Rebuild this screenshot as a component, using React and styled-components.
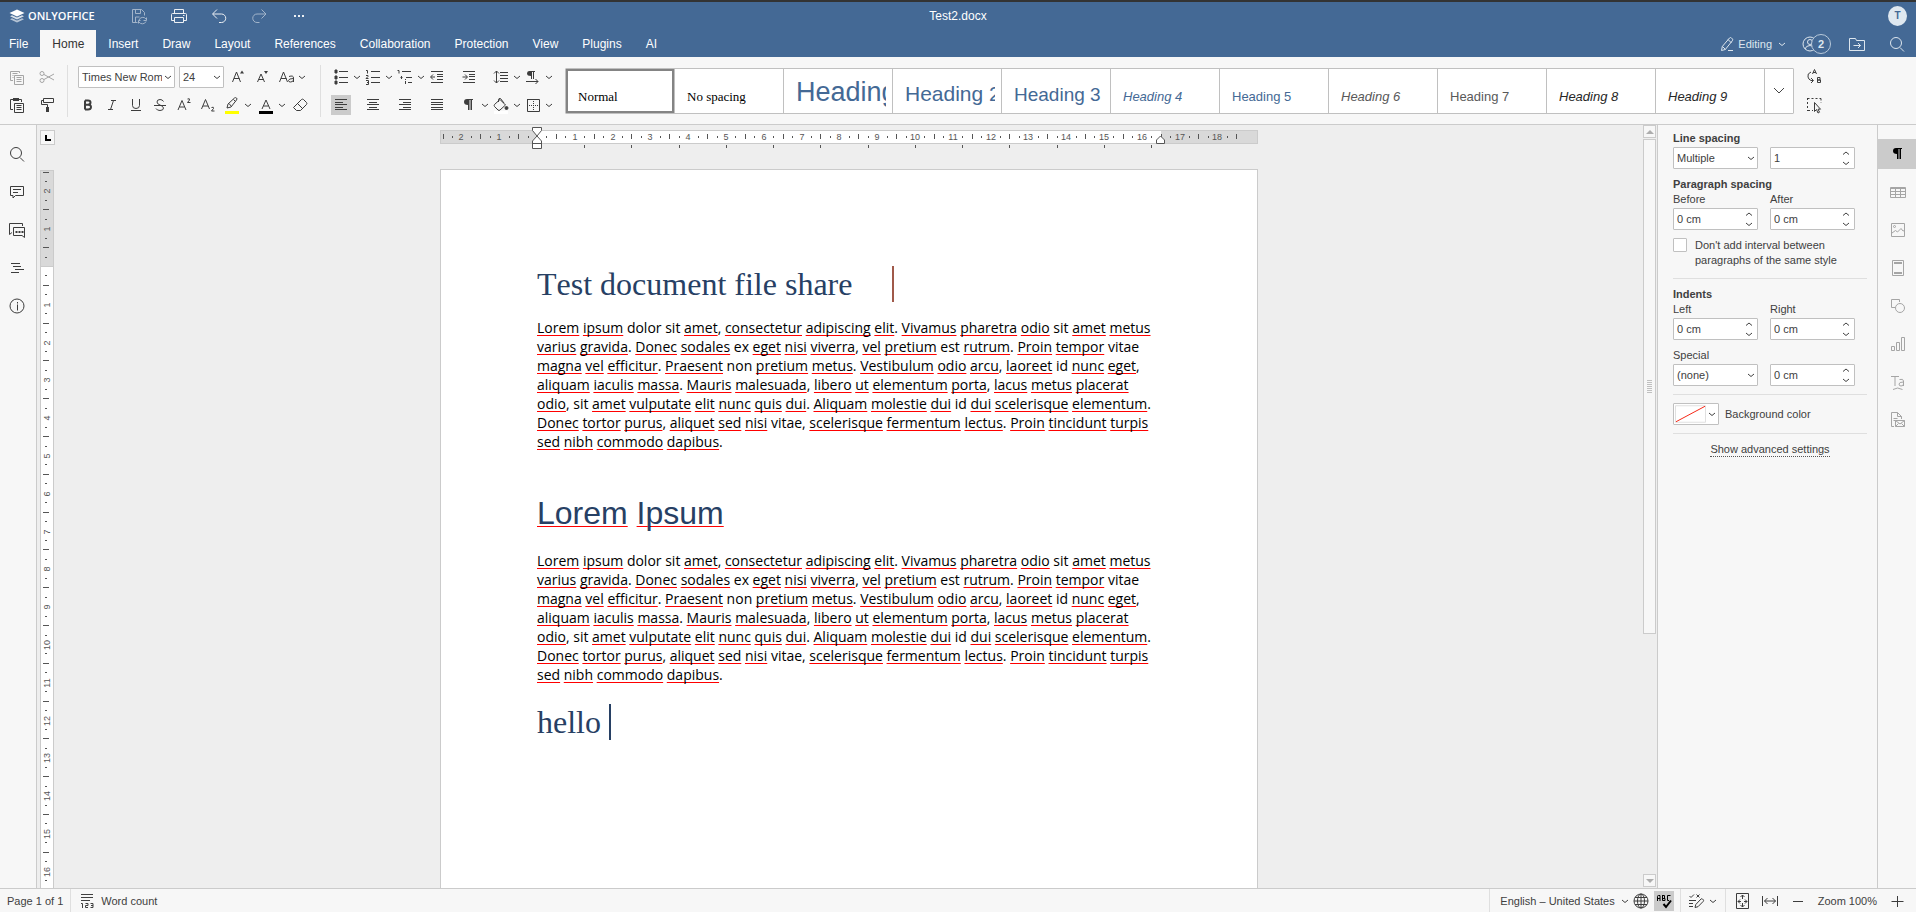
import React, { useState } from 'react';
import styled, { createGlobalStyle } from 'styled-components';

const colors = {
  header: '#446995',
  bar: '#f7f7f7',
  canvas: '#eeeeee',
  border: '#cbcbcb',
  control: '#c0c0c0',
  divider: '#dfdfdf',
  active: '#cbcbcb',
  text: '#404040',
  icon: '#3d3d3d',
  muted: '#a5a5a5',
  heading: '#274064',
  style: '#446995',
};

const CM = 37.795;

// ----- Icons, drawn on a 20 x 20 grid
const icons = {
  save: (
    <>
      <path d="M8.5 16.5h-5v-13h9l3 3v3M6.5 3.5v4h5v-4M6.5 16v-5h4" />
      <path d="M9.5 17.5v-3h2M17.5 11.5v3h-3M10 14a4 4 0 0 1 7-1M17 15.5a4 4 0 0 1-7 .5" />
    </>
  ),
  print: (
    <>
      <path d="M5.5 7V3.5h9V7M5.5 14.5h-3v-6q0-1 1-1h13q1 0 1 1v6h-3" />
      <path d="M5.5 11.5h9v5h-9zM14 9.5h1.5" />
    </>
  ),
  undo: <path d="M8 3.5L3.5 8 8 12.500M4 8h8.500a4.200 4.200 0 0 1 0 8.500H10" />,
  redo: <path d="M12.500 3.500L17 8l-4.500 4.500M16.500 8H8a4.200 4.200 0 0 0 0 8.500h2.500" />,
  more: <path d="M5 9h2v2H5zM9 9h2v2H9zM13 9h2v2h-2z" fill="currentColor" stroke="none" />,
  pencil: (
    <>
      <path d="M3.500 16.500l.8-4L11.500 4q1-1 2 0l.8.8q1 1 0 2L7.300 15.500zM10 5.500l3.500 3.500M4.500 12.500l3 3" />
      <path d="M10 16.500h5" />
    </>
  ),
  folder: <path d="M2.500 16.500v-12h6l1 2h8v10zM6.500 11.500h7M11 9l2.500 2.500L11 14" />,
  search: (
    <>
      <circle cx="9" cy="9" r="5.500" />
      <path d="M13 13.500l4 4" />
    </>
  ),
  copy: (
    <>
      <path d="M6 13.500H3.500v-9h9V6M5.500 6.500h5M5.500 8.500h1M5.500 10.500h1" />
      <path d="M7.500 8.500h9v9h-9zM9.500 10.500h5M9.500 12.500h5M9.500 14.500h5" />
    </>
  ),
  cut: (
    <>
      <circle cx="5" cy="6.500" r="2" />
      <circle cx="5" cy="13.500" r="2" />
      <path d="M7 7.500l10 5.500M7 12.500L17 7" />
    </>
  ),
  paste: (
    <>
      <path d="M6 14.500H3.500v-10H14.500V7" />
      <path d="M6 3h6v3H6z" fill="currentColor" stroke="none" />
      <path d="M7.500 8.500h9v9h-9zM9.500 10.500h5M9.500 12.500h5M9.500 14.500h5" />
    </>
  ),
  painter: (
    <>
      <path d="M6.500 3.500h10v4h-10zM6 5.500H4.500v4h6V12" />
      <path d="M9 12h3v5H9z" fill="currentColor" stroke="none" />
    </>
  ),
  grow: (
    <>
      <path d="M4.500 15l4-10 4 10M6 11.500h5.500" />
      <path d="M12 6.500l2-3 2 3z" fill="currentColor" stroke="none" />
    </>
  ),
  shrink: (
    <>
      <path d="M5.500 15L9 7l3.500 8M7 12.500h4.500" />
      <path d="M12 4l2 3 2-3z" fill="currentColor" stroke="none" />
    </>
  ),
  letterCase: (
    <>
      <path d="M3.500 15l4-10 4 10M5 11.500h5.500" />
      <path d="M13 9.500q4.500-1.500 4.500 1.500v4M17.500 11.500q-5 0-5 2 0 1.500 2 1.500 2.500 0 3-2" />
    </>
  ),
  bold: (
    <path
      d="M7 5.500v9M7 5.500h3q2.500 0 2.500 2t-2.500 2.200H7M10 9.700q3 0 3 2.400t-3 2.400H7"
      strokeWidth="2"
    />
  ),
  italic: <path d="M9 5.500h5M6 14.500h5M11.500 5.500l-3 9" />,
  underline: <path d="M6.500 4v6.500q0 3 3.500 3t3.500-3V4M5 15.500h10" />,
  strike: <path d="M13.500 6.500q-1-2-3.500-2-3 0-3 2.500 0 2 3 3t3.500 3q0 2.500-3.500 2.500-3 0-4-2M4 10.500h12" />,
  superscript: (
    <>
      <path d="M4 15L8 5.500 12 15M5.500 12h5" />
      <path d="M13.500 4q2.500-1 2 1l-2 2.500h3" />
    </>
  ),
  subscript: (
    <>
      <path d="M3.500 14l4-9.500 4 9.500M5 11h5" />
      <path d="M13.500 12.500q2.500-1 2 1l-2 2.500h3" />
    </>
  ),
  highlight: (
    <>
      <path d="M5 13l1-4 6.500-6q1-.8 2 0t0 2L9 12l-4 1M7 8.500l2.500 3M11.500 4.500l2 2" />
      <path d="M3 16h14v3H3z" fill="#ffff00" stroke="none" />
    </>
  ),
  fontColor: (
    <>
      <path d="M6 14l4-9 4 9M7.500 11h5" />
      <path d="M3 16h14v3H3z" fill="#000" stroke="none" />
    </>
  ),
  eraser: <path d="M3.500 12.500l8-8q1-.8 2 0l3 3q.8 1 0 2l-6 6h-4l-3-3zM7.500 8.500l5 5" />,
  bullets: (
    <>
      <path d="M8 4.500h9M8 10.500h9M8 15.500h9" />
      <path d="M4 3h2v3H4zM4 9h2v3H4zM4 14h2v3H4z" fill="currentColor" />
    </>
  ),
  numbers: (
    <path d="M8 4.500h9M8 10.500h9M8 15.500h9M3 3.500h1.500v3M3 8.500h2v1l-2 2h2.500M3 13.500h2.500v4H3M4 15.500h1" />
  ),
  multilevel: <path d="M2.500 3.500H4v3M7 4.500h9M11 10.500h6M13 15.500h4M6.500 9v3M5.500 10.500h2M10.500 12v1M10.500 14v3" />,
  outdent: <path d="M4 4.500h12M10 7.500h6M10 9.500h6M10 12.500h6M4 15.500h12M8 10H4M6 7.500L3.500 10 6 12.500" />,
  indent: <path d="M4 4.500h12M10 7.500h6M10 9.500h6M10 12.500h6M4 15.500h12M3.500 10H8M6 7.500L8.500 10 6 12.500" />,
  lineSpacing: <path d="M9 5.500h8M9 8.500h8M9 11.500h8M9 14.500h8M5.500 4v12M3 6.500L5.500 4 8 6.500M3 13.500L5.500 16 8 13.500" />,
  direction: (
    <>
      <path d="M6 4h6v1h-1v7h-1V5H9v7H8V9Q4 9 4 6.500T6 4z" fill="currentColor" stroke="none" />
      <path d="M3 14.500h12M12.500 12l2.500 2.500-2.500 2.500" />
    </>
  ),
  alignLeft: <path d="M4 4.500h12M4 7.500h8M4 9.500h12M4 12.500h8M4 14.500h12" />,
  alignCenter: <path d="M4 4.500h12M6 7.500h8M4 9.500h12M6 12.500h8M4 14.500h12" />,
  alignRight: <path d="M4 4.500h12M8 7.500h8M4 9.500h12M8 12.500h8M4 14.500h12" />,
  justify: <path d="M4 4.500h12M4 7.500h12M4 9.500h12M4 12.500h12M4 14.500h12" />,
  pilcrow: (
    <path d="M8 4h6v1h-1v10h-1.500V5H10.500v10H9v-5Q5 10 5 7T8 4z" fill="currentColor" stroke="none" />
  ),
  fill: (
    <>
      <path d="M9 4.500l5.500 5.500-5.500 5Q8 16 7 15l-3.500-3.500q-.7-1 0-2zM7.500 7V5q0-2 2-1.500L13 8" />
      <circle cx="15.500" cy="13" r="1.500" fill="currentColor" />
      <path d="M3 16h14v3H3z" fill="#fff" stroke="none" />
    </>
  ),
  borders: (
    <>
      <path d="M4 4.500h12.500v12H4.500V4.500z" />
      <path d="M10.500 6v9M6 10.500h9" strokeDasharray="1 1" />
    </>
  ),
  replace: (
    <>
      <path d="M7 5q-4 1.500-3 5 .5 2.500 3 3.500H9M7 11l2.500 2.500L7 16" />
      <path d="M8.500 7l2-4.500 2 4.500M9 5.500h3M13.500 10.500v5h3v-2.500h-3 2.500v-2.500z" />
    </>
  ),
  select: (
    <>
      <path d="M3.500 3v13M3.500 3.500H17M17 3.500V8M4 15.500h5" strokeDasharray="2 2" />
      <path d="M10.500 7.500v9l2-2 1.500 3.500 1.500-.8-1.500-3h2.500z" />
    </>
  ),
  comment: <path d="M3.500 4.500h13v9h-8L6 16v-2.500H3.500zM6 7.500h8M6 10.500h5" />,
  chat: (
    <>
      <path d="M5 12.500L2.500 14.500v-11h13V6M6.500 7.500h11v10L15 15.500H6.500z" />
      <path d="M8.500 11h2v2h-2zM11.500 11h2v2h-2zM14.500 11h2v2h-2z" fill="currentColor" stroke="none" />
    </>
  ),
  navigation: <path d="M4 5.500h9M6 8.500h8M8 11.500h9M4 14.500h8" />,
  info: (
    <>
      <circle cx="10" cy="10" r="7" />
      <path d="M10.500 6v1.500M10.500 8.500v6" />
    </>
  ),
  table: <path d="M2.500 5.500h15v10h-15zM2.500 6.500h15M2.500 9.500h15M2.500 12.500h15M7.500 6v9M12.500 6v9" />,
  image: (
    <>
      <path d="M3.500 3.500h13v13h-13zM4 13l3.500-2.500 2 1.500 3.500-3.500 2 2.500 1.500-.5" />
      <circle cx="6.500" cy="6.500" r="1" />
    </>
  ),
  headerFooter: (
    <>
      <path d="M4.500 2.500h11v15h-11z" />
      <path d="M6 5h8M6 15h8" strokeWidth="2" />
    </>
  ),
  shape: (
    <>
      <path d="M7 11.500H3.500v-8h8V6" />
      <circle cx="12" cy="12" r="4.500" />
    </>
  ),
  chart: <path d="M3.500 12.500h3v4h-3zM8.500 8.500h3v8h-3zM13.500 3.500h3v13h-3z" />,
  textArt: <path d="M3 4.500h8M7 4.500V14M11.500 7.500q4-1 4 1.500v5M15.500 10q-4.500 0-4.500 2t2 2q2.500 0 2.500-2M5 17.500q4.500-3 9.500 0" />,
  mailMerge: <path d="M6 16.500H3.500v-14h6l4 4V9M9.500 2.500v4h4M5.500 8.500h4M5.500 10.500h2M7.500 10.500h9v6h-9zM7.500 10.500l4.500 3.500 4.500-3.500M7.500 16.500l3-3M16.500 16.500l-3-3" />,
  wordCount: (
    <>
      <path d="M4 3.500h12M4 6.500h12M4 9.500h9" />
      <path d="M4 12.500h1.500V17M8.500 12.500h2.500v2H8.500v2H11M13.500 12.500H16v4h-2.500M14 14.500h2" />
    </>
  ),
  globe: (
    <>
      <circle cx="10" cy="10" r="7" />
      <ellipse cx="10" cy="10" rx="3.500" ry="7" />
      <path d="M10 3v14M3 10h14M4 6.500h12M4 13.500h12" />
    </>
  ),
  spelling: (
    <>
      <path
        d="M3.500 10V5.500q0-1 1-1h1.500v5.500M3.500 7.500H6M8.500 4v5.500H11V7.500H8.500M8 4.500h2.500v3M16.500 4.500h-3v5h1.500"
        stroke="#000"
      />
      <path d="M9.500 13l2.500 3 5-6.500" strokeWidth="2" stroke="#000" />
    </>
  ),
  track: (
    <>
      <path d="M2.500 5l1.500 1.500L7 3.500M9.500 3.500l3 3M12.500 3.500l-3 3M2 9.500h7M2 12.500h4M2 15.500h4" />
      <path d="M8 16.500l.8-3L14 8q.8-.6 1.500 0l.8.8q.6.700 0 1.500L11 15.700z" />
    </>
  ),
  fitPage: (
    <path d="M4.500 2.500h12v15h-12zM10.500 4v4M10.500 12v4M6 10.500h3M12 10.500h3M8.500 6l2-2 2 2M8.500 14l2 2 2-2M8 8.500l-2 2 2 2M13 8.500l2 2-2 2" />
  ),
  fitWidth: <path d="M2.500 5v10M17.500 5v10M4.500 10h11M7.500 7l-3 3 3 3M12.500 7l3 3-3 3" />,
  minus: <path d="M5 10.500h10" />,
  plus: <path d="M4.500 10.500h12M10.500 5v11" />,
};

const Icon = ({ name }) => (
  <Glyph viewBox="0 0 20 20" aria-hidden="true">
    {icons[name]}
  </Glyph>
);

const Caret = ({ up }) => (
  <CaretGlyph viewBox="0 0 12 12" aria-hidden="true">
    <path d={up ? 'M3 7.500L6 5l3 2.500' : 'M3 5l3 2.500L9 5'} />
  </CaretGlyph>
);

const ToolButton = ({ icon, label, split, active, disabled }) => (
  <Tool type="button" aria-label={label} $active={active} $disabled={disabled}>
    <Icon name={icon} />
    {split && <Caret />}
  </Tool>
);

const Combo = ({ label, options, grow, width }) => (
  <ComboBox $width={width} $grow={grow}>
    <select aria-label={label}>
      {options.map((option) => (
        <option key={option}>{option}</option>
      ))}
    </select>
    <Caret />
  </ComboBox>
);

const Spinner = ({ id, label, initial }) => {
  const [value, setValue] = useState(initial);

  const step = (delta) => {
    const unit = value.replace(/[-\d.]/g, '');
    setValue(`${Math.max(0, (parseFloat(value) || 0) + delta)}${unit}`);
  };

  return (
    <SpinBox>
      <input id={id} aria-label={label} value={value} onChange={(e) => setValue(e.target.value)} />
      <SpinButtons>
        <button type="button" aria-label="Increase" onClick={() => step(1)}><Caret up /></button>
        <button type="button" aria-label="Decrease" onClick={() => step(-1)}><Caret /></button>
      </SpinButtons>
    </SpinBox>
  );
};

// ----- Rulers
const rulerMarks = (before, after) => {
  const marks = [];
  for (let q = Math.ceil((-before / CM) * 4); q <= (after / CM) * 4; q += 1) {
    if (q !== 0) marks.push({ q, pos: Math.round(before + (q * CM) / 4) });
  }
  return marks;
};

const HorizontalRuler = () => (
  <RulerTop viewBox="0 0 818 25" aria-hidden="true">
    <path d="M0 5h818v14H0z" fill="#cbcbcb" />
    <path d="M1 6h816v12H1z" fill="#d9d9d9" />
    <path d="M97 6h624v12H97z" fill="#fff" />
    {rulerMarks(97, 706).map(({ q, pos }) => {
      if (q % 4 === 0) {
        return <text key={q} x={pos} y="15" textAnchor="middle">{Math.abs(q / 4)}</text>;
      }
      return q % 2 === 0
        ? <path key={q} d={`M${pos}.5 9v5`} stroke="#555" />
        : <path key={q} d={`M${pos}.5 11v2`} stroke="#555" />;
    })}
    {Array.from({ length: 13 }, (_, i) => (
      <path key={i} d={`M${Math.round(97 + (i + 1) * CM * 1.25)}.5 20v3`} stroke="#555" />
    ))}
    <path d="M92.500 2.500h9v3L97 11l4.500 5v7.500h-9V16L97 11l-4.500-5.500zM92.500 18.500h9" fill="#fff" stroke="#555" />
    <path d="M716.500 18.500v-3.500l4-4 4 4v3.500z" fill="#fff" stroke="#555" />
  </RulerTop>
);

const VerticalRuler = () => (
  <RulerSide viewBox="0 0 14 1056" aria-hidden="true">
    <path d="M0 0h14v1056H0z" fill="#cbcbcb" />
    <path d="M1 1h12v95H1z" fill="#d9d9d9" />
    <path d="M1 97h12v863H1z" fill="#fff" />
    {rulerMarks(96, 864).map(({ q, pos }) => {
      if (q % 4 === 0) {
        return (
          <text key={q} transform={`translate(10 ${pos + 1}) rotate(-90)`} textAnchor="middle">
            {Math.abs(q / 4)}
          </text>
        );
      }
      return q % 2 === 0
        ? <path key={q} d={`M3 ${pos}.5h6`} stroke="#555" />
        : <path key={q} d={`M5 ${pos}.5h2`} stroke="#555" />;
    })}
  </RulerSide>
);

// ----- Document
const loremLines = [
  '_Lorem_ _ipsum_ dolor sit _amet_, _consectetur_ _adipiscing_ _elit_. _Vivamus_ _pharetra_ _odio_ sit _amet_ _metus_',
  '_varius_ _gravida_. _Donec_ _sodales_ ex _eget_ _nisi_ _viverra_, _vel_ _pretium_ est _rutrum_. _Proin_ _tempor_ vitae',
  '_magna_ _vel_ _efficitur_. _Praesent_ non _pretium_ _metus_. _Vestibulum_ _odio_ _arcu_, _laoreet_ id _nunc_ _eget_,',
  '_aliquam_ _iaculis_ _massa_. _Mauris_ _malesuada_, _libero_ _ut_ _elementum_ _porta_, _lacus_ _metus_ _placerat_',
  '_odio_, sit _amet_ _vulputate_ _elit_ _nunc_ _quis_ _dui_. _Aliquam_ _molestie_ _dui_ id _dui_ _scelerisque_ _elementum_.',
  '_Donec_ _tortor_ _purus_, _aliquet_ _sed_ _nisi_ vitae, _scelerisque_ _fermentum_ _lectus_. _Proin_ _tincidunt_ _turpis_',
  '_sed_ _nibh_ _commodo_ _dapibus_.',
];

const Lorem = () => (
  <Paragraph>
    {loremLines.map((line) => (
      <Line key={line}>
        {line.split('_').map((part, i) => (i % 2 ? <Misspelled key={i}>{part}</Misspelled> : part))}
      </Line>
    ))}
  </Paragraph>
);

const tabs = ['File', 'Home', 'Insert', 'Draw', 'Layout', 'References', 'Collaboration', 'Protection', 'View', 'Plugins', 'AI'];

const serif = '"Liberation Serif", "Times New Roman", serif';

const textStyles = [
  { name: 'Normal', size: 13, color: '#000', font: serif },
  { name: 'No spacing', size: 13, color: '#000', font: serif },
  { name: 'Heading 1', size: 27, color: colors.style },
  { name: 'Heading 2', size: 21, color: colors.style },
  { name: 'Heading 3', size: 19, color: colors.style },
  { name: 'Heading 4', size: 13, color: colors.style, italic: true },
  { name: 'Heading 5', size: 13, color: colors.style },
  { name: 'Heading 6', size: 13, color: '#595959', italic: true },
  { name: 'Heading 7', size: 13, color: '#595959' },
  { name: 'Heading 8', size: 13, color: '#272727', italic: true },
  { name: 'Heading 9', size: 13, color: '#272727', italic: true },
];

const paragraphTools = [
  ['bullets', 'Bullets', true],
  ['numbers', 'Numbering', true],
  ['multilevel', 'Multilevel list', true],
  ['outdent', 'Decrease indent'],
  ['indent', 'Increase indent'],
  ['lineSpacing', 'Line spacing', true],
  ['direction', 'Text direction', true],
  ['alignLeft', 'Align left'],
  ['alignCenter', 'Align center'],
  ['alignRight', 'Align right'],
  ['justify', 'Justified'],
  ['pilcrow', 'Nonprinting characters', true],
  ['fill', 'Shading', true],
  ['borders', 'Borders', true],
];

const Header = () => (
  <Top>
    <TitleRow>
      <TitleSide>
        <Brand href="#">
          <svg width="16" height="15" viewBox="0 0 16 15" aria-hidden="true">
            <path d="M1 10.200L8 13.500l7-3.300-2-1-5 2.300-5-2.300z" fill="#fff" opacity=".6" />
            <path d="M1 7.200L8 10.500l7-3.300-2-1-5 2.300-5-2.300z" fill="#fff" opacity=".8" />
            <path d="M8 .5l7.500 3.400L8 7.400.5 3.900z" fill="#fff" />
          </svg>
          ONLYOFFICE
        </Brand>
        <QuickButton type="button" aria-label="Save" $dim><Icon name="save" /></QuickButton>
        <QuickButton type="button" aria-label="Print"><Icon name="print" /></QuickButton>
        <QuickButton type="button" aria-label="Undo"><Icon name="undo" /></QuickButton>
        <QuickButton type="button" aria-label="Redo" $dim><Icon name="redo" /></QuickButton>
        <QuickButton type="button" aria-label="More"><Icon name="more" /></QuickButton>
      </TitleSide>
      <DocTitle>Test2.docx</DocTitle>
      <TitleSide $end><Avatar>T</Avatar></TitleSide>
    </TitleRow>
    <TabRow>
      <Tabs>
        {tabs.map((tab) => (
          <Tab key={tab} type="button" $active={tab === 'Home'}>{tab}</Tab>
        ))}
      </Tabs>
      <HeaderTools>
        <HeaderButton type="button">
          <Icon name="pencil" />
          Editing
          <Caret />
        </HeaderButton>
        <HeaderButton type="button" aria-label="2 users">
          <svg width="16" height="16" viewBox="0 0 16 16" aria-hidden="true" fill="none" stroke="currentColor">
            <circle cx="8" cy="8" r="7" />
            <circle cx="8" cy="6" r="2.500" />
            <path d="M3 13q1-3.500 5-3.500t5 3.500" />
          </svg>
          <UserCount>2</UserCount>
        </HeaderButton>
        <HeaderButton type="button" aria-label="Open file location"><Icon name="folder" /></HeaderButton>
        <HeaderButton type="button" aria-label="Search"><Icon name="search" /></HeaderButton>
      </HeaderTools>
    </TabRow>
  </Top>
);

const Toolbar = () => (
  <Tools>
    <ToolGroup>
      <ToolRow $gap={10}>
        <ToolButton icon="copy" label="Copy" disabled />
        <ToolButton icon="cut" label="Cut" disabled />
      </ToolRow>
      <ToolRow $gap={10}>
        <ToolButton icon="paste" label="Paste" />
        <ToolButton icon="painter" label="Copy style" />
      </ToolRow>
    </ToolGroup>
    <Separator />
    <ToolGroup>
      <ToolRow $gap={4}>
        <Combo label="Font" width={97} options={['Times New Roman', 'Arial', 'Open Sans']} />
        <Combo label="Font size" width={45} options={['24', '11', '12']} />
        <ToolButton icon="grow" label="Increment font size" />
        <ToolButton icon="shrink" label="Decrement font size" />
        <ToolButton icon="letterCase" label="Change case" split />
      </ToolRow>
      <ToolRow>
        <ToolRow $gap={4}>
          <ToolButton icon="bold" label="Bold" />
          <ToolButton icon="italic" label="Italic" />
          <ToolButton icon="underline" label="Underline" />
          <ToolButton icon="strike" label="Strikeout" />
          <ToolButton icon="superscript" label="Superscript" />
          <ToolButton icon="subscript" label="Subscript" />
          <ToolButton icon="highlight" label="Highlight color" split />
        </ToolRow>
        <ToolRow $gap={2} $lead={2}>
          <ToolButton icon="fontColor" label="Font color" split />
          <ToolButton icon="eraser" label="Clear style" />
        </ToolRow>
      </ToolRow>
    </ToolGroup>
    <Separator />
    <ParagraphGrid>
      {paragraphTools.map(([icon, label, split]) => (
        <ToolButton key={icon} icon={icon} label={label} split={split} active={icon === 'alignLeft'} />
      ))}
    </ParagraphGrid>
    <Gallery>
      {textStyles.map((style) => (
        <StyleCell
          key={style.name}
          type="button"
          $active={style.name === 'Normal'}
          $size={style.size}
          $color={style.color}
          $font={style.font}
          $italic={style.italic}
        >
          <span>{style.name}</span>
        </StyleCell>
      ))}
      <GalleryMore type="button" aria-label="More styles">
        <svg width="14" height="10" viewBox="0 0 14 10" aria-hidden="true">
          <path d="M2 2l5 5 5-5" fill="none" stroke="#444" />
        </svg>
      </GalleryMore>
    </Gallery>
    <ToolGroup>
      <ToolRow><ToolButton icon="replace" label="Replace" /></ToolRow>
      <ToolRow><ToolButton icon="select" label="Select" /></ToolRow>
    </ToolGroup>
  </Tools>
);

const ParagraphPanel = () => {
  const [noInterval, setNoInterval] = useState(false);

  return (
    <Panel>
      <PanelTitle>Line spacing</PanelTitle>
      <FieldGrid $top={2}>
        <Combo label="Line spacing" options={['Multiple', 'At least', 'Exactly']} grow />
        <Spinner label="Line spacing value" initial="1" />
      </FieldGrid>
      <PanelTitle $top={8}>Paragraph spacing</PanelTitle>
      <FieldGrid $top={1}>
        <label htmlFor="before">Before</label>
        <label htmlFor="after">After</label>
        <Spinner id="before" initial="0 cm" />
        <Spinner id="after" initial="0 cm" />
      </FieldGrid>
      <CheckLabel>
        <input type="checkbox" checked={noInterval} onChange={(e) => setNoInterval(e.target.checked)} />
        <span>Don't add interval between paragraphs of the same style</span>
      </CheckLabel>
      <PanelLine />
      <PanelTitle $top={8}>Indents</PanelTitle>
      <FieldGrid $top={1}>
        <label htmlFor="left">Left</label>
        <label htmlFor="right">Right</label>
        <Spinner id="left" initial="0 cm" />
        <Spinner id="right" initial="0 cm" />
      </FieldGrid>
      <FieldGrid $top={8}>
        <span>Special</span>
        <span />
        <Combo label="Special" options={['(none)', 'First line', 'Hanging']} grow />
        <Spinner label="Special value" initial="0 cm" />
      </FieldGrid>
      <PanelLine />
      <ColorRow>
        <ColorButton type="button" id="background" aria-label="Background color">
          <svg width="32" height="18" viewBox="0 0 32 18" aria-hidden="true">
            <path d="M.5.5h31v17H.5z" fill="#fff" stroke="#dfdfdf" />
            <path d="M1 17L31 1" stroke="#f62211" />
          </svg>
          <Caret />
        </ColorButton>
        <label htmlFor="background">Background color</label>
      </ColorRow>
      <PanelLine />
      <Advanced href="#">Show advanced settings</Advanced>
    </Panel>
  );
};

export default function App() {
  return (
    <Shell>
      <GlobalStyle />
      <Header />
      <Toolbar />
      <Main>
        <LeftBar>
          <SideButton type="button" aria-label="Find"><Icon name="search" /></SideButton>
          <SideButton type="button" aria-label="Comments"><Icon name="comment" /></SideButton>
          <SideButton type="button" aria-label="Chat"><Icon name="chat" /></SideButton>
          <SideButton type="button" aria-label="Headings"><Icon name="navigation" /></SideButton>
          <SideButton type="button" aria-label="About"><Icon name="info" /></SideButton>
        </LeftBar>
        <RulerColumn>
          <TabStop type="button" aria-label="Tab stop">
            <svg width="6" height="6" viewBox="0 0 6 6" aria-hidden="true">
              <path d="M1 0v5h5" fill="none" stroke="#000" strokeWidth="2" />
            </svg>
          </TabStop>
          <VerticalRuler />
        </RulerColumn>
        <Canvas>
          <HorizontalRuler />
          <Page>
            <DocHeading>
              Test document file share
              <TextCursor $gap={40} $color="#a0594a" />
            </DocHeading>
            <Lorem />
            <DocHeading $sans>
              <span>
                <Misspelled>Lorem</Misspelled> <Misspelled>Ipsum</Misspelled>
              </span>
            </DocHeading>
            <Lorem />
            <DocHeading $last>
              hello
              <TextCursor $gap={8} $color={colors.heading} />
            </DocHeading>
          </Page>
        </Canvas>
        <Scrollbar>
          <ScrollButton type="button" aria-label="Scroll up">
            <svg width="8" height="4" viewBox="0 0 8 4" aria-hidden="true"><path d="M0 4l4-4 4 4z" fill="#adadad" /></svg>
          </ScrollButton>
          <Thumb>
            <svg width="5" height="13" viewBox="0 0 5 13" aria-hidden="true">
              <path d="M0 .5h5M0 2.500h5M0 4.500h5M0 6.500h5M0 8.500h5M0 10.500h5M0 12.500h5" stroke="#c0c0c0" />
            </svg>
          </Thumb>
          <ScrollButton type="button" aria-label="Scroll down">
            <svg width="8" height="4" viewBox="0 0 8 4" aria-hidden="true"><path d="M0 0l4 4 4-4z" fill="#adadad" /></svg>
          </ScrollButton>
        </Scrollbar>
        <ParagraphPanel />
        <RightBar>
          <SideButton type="button" aria-label="Paragraph settings" $active><Icon name="pilcrow" /></SideButton>
          <SideButton type="button" aria-label="Table settings" $dim><Icon name="table" /></SideButton>
          <SideButton type="button" aria-label="Image settings" $dim><Icon name="image" /></SideButton>
          <SideButton type="button" aria-label="Header and footer settings" $dim><Icon name="headerFooter" /></SideButton>
          <SideButton type="button" aria-label="Shape settings" $dim><Icon name="shape" /></SideButton>
          <SideButton type="button" aria-label="Chart settings" $dim><Icon name="chart" /></SideButton>
          <SideButton type="button" aria-label="Text Art settings" $dim><Icon name="textArt" /></SideButton>
          <SideButton type="button" aria-label="Mail merge settings" $dim><Icon name="mailMerge" /></SideButton>
        </RightBar>
      </Main>
      <Status>
        <StatusGroup $left={7} $right={7}>
          <StatusText type="button">Page 1 of 1</StatusText>
        </StatusGroup>
        <StatusGroup $grow>
          <StatusText type="button"><Icon name="wordCount" />Word count</StatusText>
        </StatusGroup>
        <StatusGroup $left={10}>
          <StatusText type="button">English – United States<Caret /></StatusText>
          <StatusTools>
            <Tool type="button" aria-label="Set document language"><Icon name="globe" /></Tool>
            <Tool type="button" aria-label="Spell checking" $active><Icon name="spelling" /></Tool>
          </StatusTools>
        </StatusGroup>
        <StatusGroup>
          <ToolButton icon="track" label="Track changes" split />
        </StatusGroup>
        <StatusGroup $right={9}>
          <StatusTools $gap={8}>
            <ToolButton icon="fitPage" label="Fit to page" />
            <ToolButton icon="fitWidth" label="Fit to width" />
            <ToolButton icon="minus" label="Zoom out" />
          </StatusTools>
          <ZoomValue>Zoom 100%</ZoomValue>
          <ToolButton icon="plus" label="Zoom in" />
        </StatusGroup>
      </Status>
    </Shell>
  );
}

// ----- Styled
const GlobalStyle = createGlobalStyle`
  * {
    box-sizing: border-box;
  }

  body {
    margin: 0;
    font-family: "Liberation Sans", Arial, sans-serif;
    font-size: 11px;
    line-height: 14px;
    color: ${colors.text};
  }

  button, input, select {
    font: inherit;
    color: inherit;
    margin: 0;
  }

  button {
    padding: 0;
    border: none;
    background: none;
    white-space: nowrap;
  }
`;

const Glyph = styled.svg`
  flex: none;
  width: 20px;
  height: 20px;
  fill: none;
  stroke: currentColor;
`;

const CaretGlyph = styled.svg`
  flex: none;
  width: 12px;
  height: 12px;
  fill: none;
  stroke: currentColor;
`;

const Shell = styled.div`
  display: flex;
  flex-direction: column;
  height: 100vh;
  overflow: hidden;
  background: ${colors.bar};
`;

const Top = styled.header`
  background: ${colors.header};
  border-top: 2px solid #333;
  color: #fff;
  font-size: 12px;
`;

const TitleRow = styled.div`
  display: grid;
  grid-template-columns: 1fr auto 1fr;
  align-items: center;
  height: 28px;
  padding: 0 9px;
`;

const TitleSide = styled.div`
  display: flex;
  align-items: center;
  justify-content: ${({ $end }) => ($end ? 'flex-end' : 'flex-start')};
`;

const Brand = styled.a`
  display: flex;
  align-items: center;
  gap: 3px;
  width: 110px;
  color: #fff;
  font-family: "Open Sans", sans-serif;
  font-size: 11px;
  font-weight: 600;
  text-decoration: none;
`;

const QuickButton = styled.button`
  display: flex;
  justify-content: center;
  width: 40px;
  opacity: ${({ $dim }) => ($dim ? 0.5 : 0.9)};
`;

const DocTitle = styled.div`
  text-align: center;
`;

const Avatar = styled.div`
  width: 19px;
  height: 20px;
  border-radius: 50%;
  background: #dfe8f0;
  color: ${colors.header};
  font-size: 10px;
  font-weight: 700;
  line-height: 20px;
  text-align: center;
`;

const TabRow = styled.div`
  display: flex;
  justify-content: space-between;
  height: 27px;
`;

const Tabs = styled.nav`
  display: flex;
`;

const Tab = styled.button`
  padding: 0 12px;
  background: ${({ $active }) => ($active ? colors.bar : 'transparent')};
  color: ${({ $active }) => ($active ? '#333' : '#fff')};

  &:first-child {
    padding-left: 9px;
  }
`;

const HeaderTools = styled.div`
  display: flex;
  align-items: center;
  gap: 14px;
  padding-right: 9px;
`;

const HeaderButton = styled.button`
  display: flex;
  align-items: center;
  color: #dde6ee;
  font-size: 11px;

  & > ${CaretGlyph} {
    margin-left: 4px;
  }

  &:nth-child(3) {
    margin-left: 2px;
  }

  &:last-child {
    margin-left: 6px;
  }
`;

const UserCount = styled.span`
  width: 20px;
  height: 20px;
  margin-left: -7px;
  border: 1px solid #b9cadb;
  border-radius: 50%;
  background: ${colors.header};
  font-weight: 700;
  line-height: 18px;
  text-align: center;
`;

const Tools = styled.div`
  display: flex;
  align-items: flex-start;
  gap: 10px;
  padding: 8px 7px;
  height: 68px;
  flex: none;
  border-bottom: 1px solid ${colors.border};
`;

const ToolGroup = styled.div`
  display: flex;
  flex: none;
  flex-direction: column;
  gap: 6px;
  padding-top: 1px;
`;

const ToolRow = styled.div`
  display: flex;
  align-items: center;
  gap: ${({ $gap }) => $gap || 0}px;
  padding-left: ${({ $lead }) => $lead || 0}px;
  height: 22px;
`;

const Separator = styled.div`
  width: 1px;
  height: 52px;
  flex: none;
  background: ${colors.divider};
`;

const Tool = styled.button`
  display: flex;
  flex: none;
  align-items: center;
  height: 20px;
  background: ${({ $active }) => ($active ? colors.active : 'transparent')};
  color: ${({ $disabled }) => ($disabled ? colors.muted : colors.icon)};
`;

const ParagraphGrid = styled.div`
  display: grid;
  flex: none;
  grid-template-columns: repeat(7, 32px);
  grid-auto-rows: 22px;
  justify-items: start;
  align-items: center;
  row-gap: 6px;
  padding-top: 1px;
`;

const Gallery = styled.div`
  display: flex;
  min-width: 0;
  height: 46px;
  margin-top: 3px;
  overflow: hidden;
  border: 1px solid ${colors.control};
  border-radius: 1px;
  background: #fff;
`;

const StyleCell = styled.button`
  display: flex;
  flex: none;
  align-items: baseline;
  width: 109px;
  padding: 0 6px 0 12px;
  border-right: 1px solid ${colors.control};
  box-shadow: ${({ $active }) => ($active ? 'inset 0 0 0 2px #848484' : 'none')};
  color: ${({ $color }) => $color};
  font-family: ${({ $font }) => $font || 'inherit'};
  font-size: ${({ $size }) => $size}px;
  font-style: ${({ $italic }) => ($italic ? 'italic' : 'normal')};
  line-height: 32px;
  text-align: left;

  &::before {
    content: '';
    height: 32px;
  }

  span {
    flex: 1;
    overflow: hidden;
  }
`;

const GalleryMore = styled.button`
  display: flex;
  flex: none;
  align-items: center;
  justify-content: center;
  width: 28px;
`;

const ComboBox = styled.div`
  position: relative;
  width: ${({ $grow, $width }) => ($grow ? 'auto' : `${$width}px`)};
  height: 22px;

  select {
    width: 100%;
    height: 22px;
    padding: 0 12px 0 3px;
    border: 1px solid ${colors.control};
    border-radius: 1px;
    appearance: none;
    background: #fff;
    overflow: hidden;
  }

  ${CaretGlyph} {
    position: absolute;
    top: 5px;
    right: 1px;
    pointer-events: none;
  }
`;

const SpinBox = styled.div`
  display: flex;
  height: 22px;
  border: 1px solid ${colors.control};
  border-radius: 1px;
  background: #fff;

  input {
    flex: 1;
    min-width: 0;
    padding: 0 3px;
    border: none;
    background: none;
  }
`;

const SpinButtons = styled.div`
  display: flex;
  flex-direction: column;
  width: 16px;

  button {
    display: flex;
    align-items: center;
    justify-content: center;
    height: 10px;
  }
`;

const Main = styled.main`
  display: flex;
  flex: 1;
  min-height: 0;
`;

const LeftBar = styled.aside`
  display: flex;
  flex: none;
  flex-direction: column;
  gap: 8px;
  width: 37px;
  padding: 14px 2px 0 0;
  border-right: 1px solid ${colors.border};
`;

const SideButton = styled.button`
  display: flex;
  align-items: center;
  justify-content: center;
  height: 30px;
  background: ${({ $active }) => ($active ? colors.active : 'transparent')};
  color: ${({ $active, $dim }) => {
    if ($active) return '#000';
    return $dim ? colors.muted : colors.icon;
  }};
`;

const RulerColumn = styled.div`
  display: flex;
  flex: none;
  flex-direction: column;
  align-items: flex-start;
  gap: 25px;
  width: 18px;
  padding: 5px 0 0 3px;
  overflow: hidden;
  background: ${colors.canvas};
`;

const TabStop = styled.button`
  display: flex;
  flex: none;
  align-items: center;
  justify-content: center;
  width: 15px;
  height: 15px;
  border: 1px solid ${colors.border};
  background: ${colors.bar};
`;

const RulerTop = styled.svg`
  flex: none;
  width: 818px;
  height: 25px;
  font-size: 9px;
  fill: #555;
`;

const RulerSide = styled.svg`
  flex: none;
  width: 14px;
  height: 1056px;
  font-size: 9px;
  fill: #555;
`;

const Canvas = styled.div`
  display: flex;
  flex: 1;
  flex-direction: column;
  align-items: center;
  min-width: 0;
  overflow: hidden;
  background: ${colors.canvas};
`;

const Page = styled.article`
  flex: none;
  width: 818px;
  min-height: 1058px;
  margin-top: 19px;
  padding: 96px;
  border: 1px solid ${colors.border};
  background: #fff;
`;

const DocHeading = styled.h1`
  display: flex;
  align-items: flex-start;
  margin: ${({ $sans, $last }) => {
    if ($sans) return '44px 0 19px';
    return $last ? '20px 0 0' : '0 0 15px';
  }};
  color: ${colors.heading};
  font-family: ${({ $sans }) => ($sans ? 'inherit' : serif)};
  font-size: 32px;
  font-weight: 400;
  font-kerning: none;
  line-height: 37px;
`;

const TextCursor = styled.span`
  width: 2px;
  height: 36px;
  margin-left: ${({ $gap }) => $gap}px;
  background: ${({ $color }) => $color};
`;

const Paragraph = styled.p`
  margin: 0;
  color: #000;
  font-family: "Open Sans", sans-serif;
  font-size: 14px;
  line-height: 19px;
`;

const Line = styled.span`
  display: block;
  white-space: nowrap;
`;

const Misspelled = styled.span`
  text-decoration: underline #f00 1px;
  text-decoration-skip-ink: none;
  text-underline-offset: 2px;
`;

const Scrollbar = styled.div`
  display: flex;
  flex: none;
  flex-direction: column;
  width: 14px;
  padding-bottom: 1px;
  background: ${colors.canvas};
`;

const ScrollButton = styled.button`
  display: flex;
  flex: none;
  align-items: center;
  justify-content: center;
  width: 13px;
  height: 13px;
  border: 1px solid ${colors.border};
  background: ${colors.bar};

  &:last-child {
    margin-top: auto;
  }
`;

const Thumb = styled.div`
  display: flex;
  align-items: center;
  justify-content: center;
  width: 13px;
  height: 65%;
  margin-top: 1px;
  border: 1px solid ${colors.border};
  background: ${colors.bar};
`;

const Panel = styled.aside`
  flex: none;
  width: 220px;
  padding: 6px 10px 0 15px;
  border-left: 1px solid ${colors.border};
`;

const PanelTitle = styled.h2`
  margin: ${({ $top }) => $top || 0}px 0 0;
  font-size: 11px;
  font-weight: 700;
`;

const FieldGrid = styled.div`
  display: grid;
  grid-template-columns: 85px 85px;
  column-gap: 12px;
  row-gap: 2px;
  margin-top: ${({ $top }) => $top}px;
`;

const CheckLabel = styled.label`
  display: flex;
  gap: 8px;
  margin: 8px 0 10px;
  line-height: 15px;

  input {
    flex: none;
    width: 14px;
    height: 14px;
    margin: 0;
    border: 1px solid ${colors.control};
    border-radius: 1px;
    appearance: none;
    background: #fff;
  }

  input:checked {
    background: ${colors.header};
  }

  span {
    width: 150px;
  }
`;

const PanelLine = styled.hr`
  height: 1px;
  margin: 8px 0 0;
  border: none;
  background: ${colors.divider};
`;

const ColorRow = styled.div`
  display: flex;
  align-items: center;
  gap: 6px;
  margin-top: 8px;
`;

const ColorButton = styled.button`
  display: flex;
  align-items: center;
  width: 46px;
  height: 22px;
  padding-left: 1px;
  border: 1px solid ${colors.control};
  border-radius: 1px;
  background: #fff;
`;

const Advanced = styled.a`
  display: block;
  width: max-content;
  margin: 8px auto 0;
  border-bottom: 1px dotted #555;
  color: inherit;
  text-decoration: none;
`;

const RightBar = styled.aside`
  display: flex;
  flex: none;
  flex-direction: column;
  gap: 8px;
  width: 39px;
  padding-top: 14px;
  border-left: 1px solid ${colors.border};

  ${SideButton} {
    padding-left: 2px;
  }
`;

const Status = styled.footer`
  display: flex;
  flex: none;
  height: 24px;
  border-top: 1px solid ${colors.border};
`;

const StatusGroup = styled.div`
  display: flex;
  align-items: center;
  flex: ${({ $grow }) => ($grow ? 1 : 'none')};
  padding: 0 ${({ $right }) => $right || 6}px 0 ${({ $left }) => $left || 6}px;
  border-left: 1px solid ${colors.divider};

  &:first-child {
    border-left: none;
  }
`;

const StatusTools = styled.div`
  display: flex;
  align-items: center;
  gap: ${({ $gap }) => $gap || 3}px;
`;

const StatusText = styled.button`
  display: flex;
  align-items: center;
  gap: 4px;
`;

const ZoomValue = styled.span`
  padding: 0 10px;
`;
